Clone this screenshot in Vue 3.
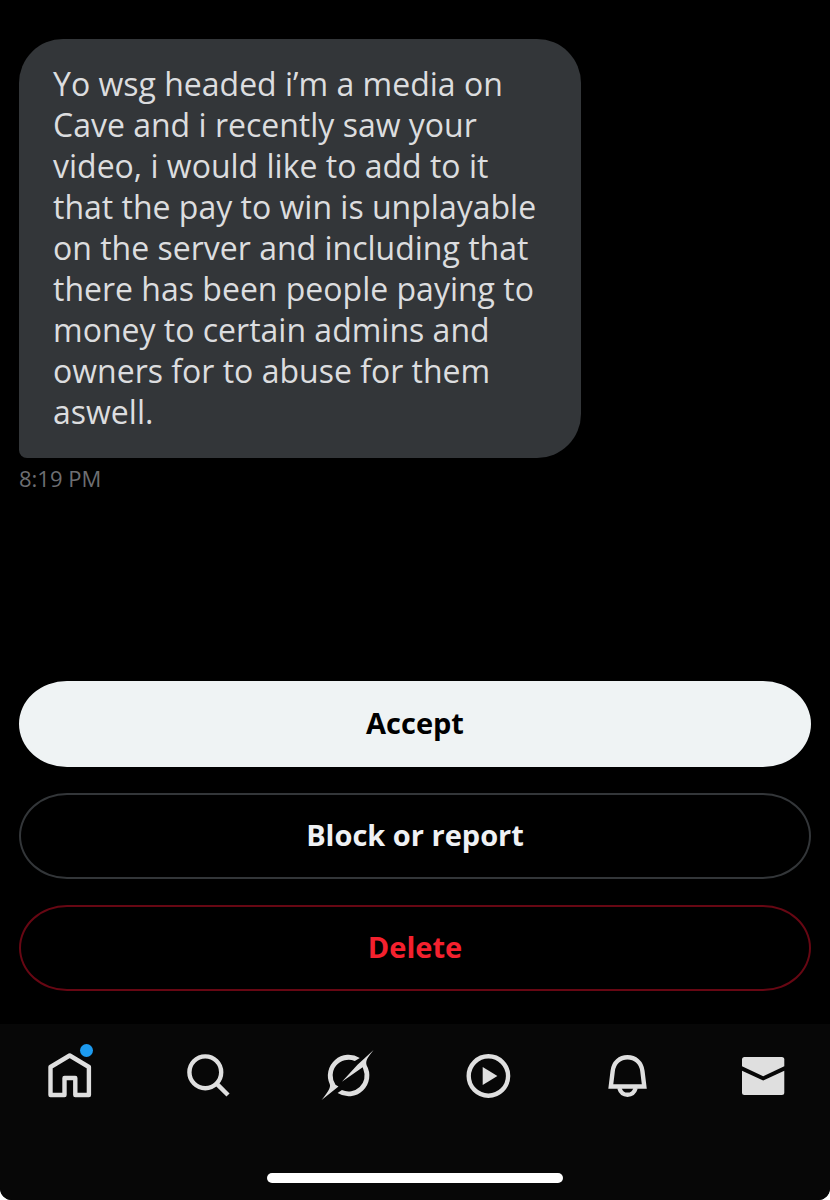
<script setup>
const message =
  'Yo wsg headed i’m a media on Cave and i recently saw your video, i would like to add to it that the pay to win is unplayable on the server and including that there has been people paying to money to certain admins and owners for to abuse for them aswell.'
</script>

<template>
  <div class="screen">
    <main class="chat">
      <p class="bubble">{{ message }}</p>
      <time class="time" datetime="20:19">8:19 PM</time>
    </main>

    <div class="actions">
      <button type="button" class="action accept">Accept</button>
      <button type="button" class="action block">Block or report</button>
      <button type="button" class="action delete">Delete</button>
    </div>

    <footer class="dock">
      <nav class="tabs" aria-label="Main">
        <a href="#home" aria-label="Home">
          <svg viewBox="0 0 60 60">
            <path class="line" d="M10.5 21 29.7 9.5 48.9 21V49H35.3V32H24.5V49H10.5Z" />
            <circle class="dot" cx="46.5" cy="4.5" r="6.5" />
          </svg>
        </a>
        <a href="#search" aria-label="Search">
          <svg viewBox="0 0 60 60">
            <circle class="line" cx="26.3" cy="26.3" r="15.9" />
            <path class="line" d="M37.6 37.6 49 49" />
          </svg>
        </a>
        <a href="#grok" aria-label="Grok">
          <svg viewBox="0 0 60 60">
            <path d="M41.8 12.1A20.7 20.7 0 0 0 11.8 38.2C12.8 41.5 10.6 45 3.6 54L20.5 40.5 17.5 38.8A16 16 0 0 1 36.8 14.9Z" />
            <path d="M55.6 4C49.4 12 47.4 14.5 48.6 19.3A20.7 20.7 0 0 1 19.6 47.1L23.9 44.1A16 16 0 0 0 45.4 23.5L44.7 21.2 23.9 35.7 39.5 18.8Z" />
          </svg>
        </a>
        <a href="#video" aria-label="Video">
          <svg viewBox="0 0 60 60">
            <circle class="line" cx="30.4" cy="30" r="19.7" />
            <path d="M24.7 21 39.4 30 24.7 39Z" />
          </svg>
        </a>
        <a href="#notifications" aria-label="Notifications">
          <svg viewBox="0 0 60 60">
            <path class="line bell" d="M13.8 40.5 15.7 25C16.6 16.2 23 11.2 30.5 11.2S44.4 16.2 45.4 25L47.3 40.5Z" />
            <path class="line" d="M22.3 42C23.6 46.4 26.4 48.8 30.5 48.8S37.4 46.4 38.7 42" />
          </svg>
        </a>
        <a href="#messages" aria-label="Messages">
          <svg viewBox="0 0 60 60">
            <path d="M6 20.3V13.5Q6 11 8.500 11H45.800Q48.300 11 48.300 13.500V20.300L27.200 30.200Z" />
            <path d="M6 24.700 27.200 34.500 48.300 24.700V46.500Q48.300 49 45.800 49H8.500Q6 49 6 46.500Z" />
          </svg>
        </a>
      </nav>
      <div class="indicator"></div>
    </footer>
  </div>
</template>

<style>
html,
body {
  margin: 0;
  background: #fff;
}
</style>

<style scoped>
.screen {
  display: flex;
  flex-direction: column;
  min-height: 100vh;
  overflow: hidden;
  background: #000;
  border-radius: 0 0 12px 12px;
  font-family: "Open Sans", "Noto Sans", sans-serif;
}

.chat {
  flex: 1;
  padding: 39px 19px 32px;
}

.bubble {
  box-sizing: border-box;
  max-width: 562px;
  margin: 0;
  padding: 24px 34px 26px;
  border-radius: 44px 44px 44px 8px;
  background: #333639;
  color: #dcdddf;
  font-size: 32px;
  line-height: 41px;
}

.time {
  display: block;
  margin-top: 4px;
  color: #6d6e72;
  font-size: 22px;
  line-height: 32px;
}

.actions {
  display: flex;
  flex-direction: column;
  gap: 26px;
  padding: 0 19px 33px;
}

.action {
  height: 86px;
  padding: 0 32px 4px;
  border: 2px solid;
  border-radius: 48px / 43px;
  background: #000;
  font-family: inherit;
  font-size: 29px;
  font-weight: 700;
}

.accept {
  border-color: #eff3f4;
  background: #eff3f4;
  color: #000;
}

.block {
  border-color: #333639;
  color: #eff1f4;
}

.delete {
  border-color: #670713;
  color: #f4212e;
}

.dock {
  padding: 22px 0 17px;
  background: #070707;
}

.tabs {
  display: flex;
  justify-content: space-between;
  padding: 0 34px 0 40px;
}

.tabs a {
  display: block;
  width: 60px;
  height: 60px;
}

.tabs svg {
  display: block;
  width: 100%;
  height: 100%;
  overflow: visible;
  fill: #dfdfdf;
}

.tabs .line {
  fill: none;
  stroke: #dfdfdf;
  stroke-width: 4.4;
  stroke-linejoin: round;
}

.tabs .bell {
  stroke-linejoin: miter;
}

.tabs .dot {
  fill: #1d9bf0;
}

.indicator {
  width: 296px;
  max-width: 60%;
  height: 10px;
  margin: 67px auto 0;
  border-radius: 5px;
  background: #fff;
}
</style>
